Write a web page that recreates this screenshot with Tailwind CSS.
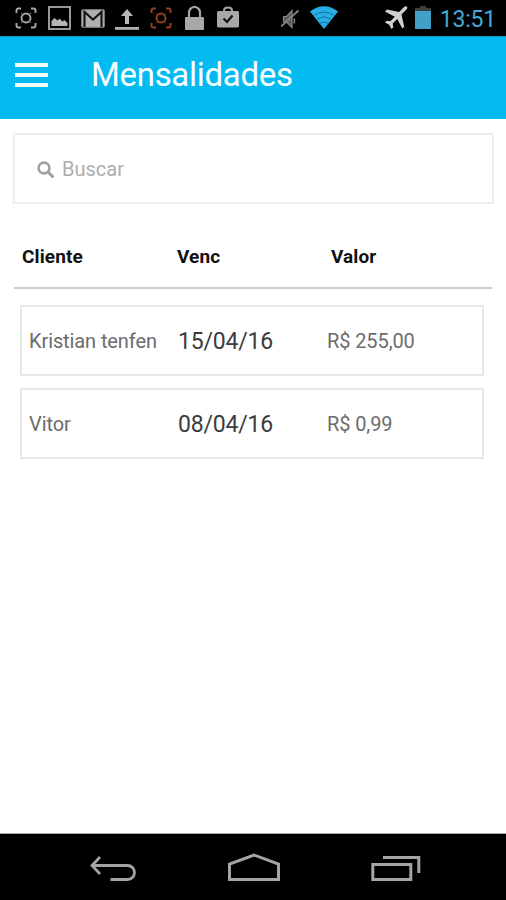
<!DOCTYPE html>
<html lang="pt-BR">
<head>
    <meta charset="UTF-8">
    <meta name="viewport" content="width=device-width, initial-scale=1.0">
    <title>Mensalidades</title>
    <script src="https://cdn.jsdelivr.net/npm/@tailwindcss/browser@4"></script>
</head>
<body class="bg-white font-['Roboto',sans-serif]">
    <div class="flex flex-col w-[506px] h-[900px] overflow-hidden">
        <!-- Status bar -->
        <div class="flex items-center h-9 shrink-0 bg-black pl-[15px] pr-[10px]">
            <svg class="w-[22px] h-[22px]" viewBox="0 0 22 22" fill="none" stroke="#a8a8a8" stroke-width="1.9">
                <path d="M1.500 6V3.500q0-2 2-2H6M16 1.500h2.500q2 0 2 2V6M20.500 16v2.500q0 2-2 2H16M6 20.500H3.500q-2 0-2-2V16"/>
                <circle cx="11" cy="11" r="4.500"/>
                <path d="M6.200 6.200l1.500 1.500M15.800 6.200l-1.500 1.500M6.200 15.800l1.500-1.500M15.800 15.800l-1.500-1.500" stroke-width="1"/>
            </svg>
            <svg class="w-[23px] h-[24px] ml-[11px]" viewBox="0 0 23 24">
                <rect x="1" y="1" width="21" height="22" fill="none" stroke="#a8a8a8" stroke-width="1.800"/>
                <path d="M3.500 20v-5l3-3 3 2.500 2-2 3 3 2-1.500 3 3v3z" fill="#b4b4b4"/>
            </svg>
            <svg class="w-[24px] h-[19px] ml-[10px]" viewBox="0 0 24 19">
                <rect x="0.700" y="0.700" width="22.600" height="17.600" rx="1" fill="#b0b0b0" stroke="#888888"/>
                <path d="M3.500 18V3l8.500 7.500L20.500 3v15" fill="none" stroke="#161616" stroke-width="2.200"/>
            </svg>
            <svg class="w-[24px] h-[22px] ml-[10px] mt-[4px]" viewBox="0 0 24 22">
                <path d="M12 0l6 7h-4v8h-4V7H6z" fill="#b8b8b8"/>
                <path d="M0 18h24v2.800H0z" fill="#b0b0b0"/>
            </svg>
            <svg class="w-[22px] h-[22px] ml-[11px]" viewBox="0 0 22 22" fill="none" stroke="#96401f" stroke-width="1.9">
                <path d="M1.500 6V3.500q0-2 2-2H6M16 1.500h2.500q2 0 2 2V6M20.500 16v2.500q0 2-2 2H16M6 20.500H3.500q-2 0-2-2V16"/>
                <circle cx="11" cy="11" r="4.500"/>
                <path d="M6.200 6.200l1.500 1.500M15.800 6.200l-1.500 1.500M6.200 15.800l1.500-1.500M15.800 15.800l-1.500-1.500" stroke-width="1"/>
            </svg>
            <svg class="w-[19px] h-[24px] ml-[13px]" viewBox="0 0 19 24">
                <path d="M4 11V6.500a5.500 5.500 0 0 1 11 0V11" fill="none" stroke="#a4a4a4" stroke-width="2.200"/>
                <rect x="0" y="11" width="19" height="13" rx="1" fill="#a8a8a8"/>
            </svg>
            <svg class="w-[22px] h-[22px] ml-[13px] -mt-[2px]" viewBox="0 0 22 22">
                <path d="M7 6V4.500q0-3 4-3t4 3V6" fill="none" stroke="#a4a4a4" stroke-width="2"/>
                <rect x="0" y="5" width="22" height="16.500" rx="1.500" fill="#a8a8a8"/>
                <path d="M6.500 12.500l3.500 3.500 5.500-6.500" fill="none" stroke="#111111" stroke-width="2.200"/>
            </svg>
            <svg class="w-[18px] h-[20px] ml-[42px] mt-[2px]" viewBox="0 0 18 20" fill="none" stroke="#848484">
                <path d="M2.500 7.500h3L11 1.500v17l-5.500-5.500h-3z" fill="#5c5c5c" stroke-width="1.200"/>
                <path d="M0 17.500L17.500 1.500" stroke-width="1.800"/>
                <path d="M12.800 9.500q1.500 2 0 5" stroke-width="1.400"/>
            </svg>
            <svg class="w-[28px] h-[23px] ml-[11px] -mt-[1px]" viewBox="0 0 28 23">
                <path d="M0 5.500Q14-5 28 5.500L14 23z" fill="#27aee4"/>
                <path d="M3.500 9.500Q14 2.500 24.500 9.500M6.500 13.500Q14 8.500 21.500 13.500M9.500 17.500Q14 14.500 18.500 17.500" fill="none" stroke="#0c729b" stroke-width="1"/>
            </svg>
            <svg class="w-[24px] h-[24px] ml-[46px]" viewBox="0 0 24 24" fill="#d0d0d0">
                <path d="M22.800.600q1.200 1.200-.600 3.200L17.500 8.500l2.700 12.200-1.900 1.900-5-9.500-4.600 4.400.600 3.800-1.800 1.600-2.300-4.200L1 16.400l1.600-1.700 3.800.500 4.400-4.500L1 5.500l2-1.900 12.200 2.500 4.600-4.800q1.800-1.800 3-.700z"/>
            </svg>
            <svg class="w-[16px] h-[23px] ml-[7px] -mt-[1px]" viewBox="0 0 16 23">
                <path d="M5 0h6v2h5v4H0V2h5z" fill="#3d3d3d"/>
                <rect x="0" y="5" width="16" height="18" fill="#41a0c8"/>
            </svg>
            <span class="ml-auto text-[23px] leading-9 pt-[3px] text-[#42a9d6] tracking-[-0.2px]">13:51</span>
        </div>

        <!-- App header -->
        <div class="flex items-center h-[83px] shrink-0 bg-[#04bbf1] border-t border-[#158fb4] pl-[15px] pb-[6px]">
            <div class="flex flex-col gap-[6px] w-[33px] -mt-px">
                <div class="h-[4px] bg-[#f0fcff]"></div>
                <div class="h-[4px] bg-[#f0fcff]"></div>
                <div class="h-[4px] bg-[#f0fcff]"></div>
            </div>
            <h1 class="ml-[43px] text-[33px] leading-10 tracking-[-0.3px] text-[#f6feff]">Mensalidades</h1>
        </div>

        <!-- Content -->
        <div class="flex-1 px-[13px] pt-[14px]">
            <div class="flex items-center w-[481px] h-[71px] border-2 border-[#ededed] pl-[22px]">
                <svg class="w-[17px] h-[17px] mt-[2px]" viewBox="0 0 17 17" fill="none" stroke="#a0a0a0" stroke-width="2.600">
                    <circle cx="7" cy="7" r="5.400"/>
                    <path d="M11 11l4.500 4.500" stroke-width="3" stroke-linecap="round"/>
                </svg>
                <span class="ml-[8px] text-[20px] text-[#adadad]">Buscar</span>
            </div>

            <div class="grid grid-cols-[155px_154px_1fr] items-center h-[62px] mt-[21px] pl-[9px] pt-[2px] text-[19px] tracking-[0.1px] font-bold text-[#111111]">
                <span>Cliente</span>
                <span>Venc</span>
                <span>Valor</span>
            </div>
            <div class="h-[2px] w-[478px] ml-px bg-[#cccccc]"></div>

            <div class="flex flex-col gap-[12px] mt-[16px] ml-[7px] w-[464px]">
                <div class="grid grid-cols-[149px_149px_1fr] items-center h-[71px] border-2 border-[#e7e7e7] pl-[7px] text-[20px] tracking-[-0.1px] text-[#6c6c6c]">
                    <span>Kristian tenfen</span>
                    <span class="text-[23px] tracking-[-0.2px] pt-[3px] text-[#3c3c3c]">15/04/16</span>
                    <span>R$ 255,00</span>
                </div>
                <div class="grid grid-cols-[149px_149px_1fr] items-center h-[71px] border-2 border-[#e7e7e7] pl-[7px] text-[20px] tracking-[-0.1px] text-[#6c6c6c]">
                    <span>Vitor</span>
                    <span class="text-[23px] tracking-[-0.2px] pt-[3px] text-[#3c3c3c]">08/04/16</span>
                    <span>R$ 0,99</span>
                </div>
            </div>
        </div>

        <!-- Navigation bar -->
        <div class="flex items-center h-[67px] shrink-0 bg-black border-t border-[#aaaaaa] pl-[90px]">
            <svg class="w-[46px] h-[26px] mt-[3px]" viewBox="0 0 46 26" fill="none" stroke="#a4a4a4" stroke-width="2.800">
                <path d="M1.500 9.500H37.500a7 7 0 0 1 0 14H20.500M10 1L2 9.500 10 18"/>
            </svg>
            <svg class="w-[52px] h-[28px] ml-[92px]" viewBox="0 0 52 28" fill="none" stroke="#a4a4a4" stroke-width="3">
                <path d="M1.500 26.500V11L26 2l24.500 9v15.500z"/>
            </svg>
            <svg class="w-[50px] h-[25px] ml-[91px] mt-[3px]" viewBox="0 0 50 25" fill="none" stroke="#a4a4a4" stroke-width="3">
                <path d="M1.800 8.500h38v15h-38zM12 1.500h35.800V17"/>
            </svg>
        </div>
    </div>
</body>
</html>
